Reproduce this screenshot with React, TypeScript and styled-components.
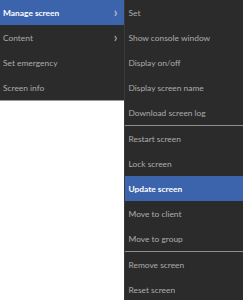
import styled, { createGlobalStyle } from "styled-components";

const GlobalStyle = createGlobalStyle`
  html, body {
    margin: 0;
    padding: 0;
    background: #ffffff;
  }
  body {
    font-family: Lato, "Open Sans", sans-serif;
  }
`;

const Page = styled.div`
  display: flex;
  align-items: flex-start;
  width: 243px;
  height: 300px;
  overflow: hidden;
`;

const Menu = styled.div<{ $width: number }>`
  width: ${(p) => p.$width}px;
  background: #2b2b2b;
  display: flex;
  flex-direction: column;
`;

const MainMenu = styled(Menu)`
  border-bottom: 1px solid #9a9a9a;
`;

const SubMenu = styled(Menu)`
  border-left: 1px solid #3a3a3a;
  height: 300px;
`;

const Item = styled.div<{ $active?: boolean }>`
  height: 25px;
  display: flex;
  align-items: center;
  justify-content: space-between;
  padding: 0 7px 0 3px;
  font-size: 8.4px;
  color: ${(p) => (p.$active ? "#ffffff" : "#ababab")};
  font-weight: ${(p) => (p.$active ? 700 : 400)};
  background: ${(p) => (p.$active ? "#3c64ad" : "transparent")};
  white-space: nowrap;
`;

const Arrow = styled.span`
  font-size: 13px;
  line-height: 1;
  color: #c0c0c0;
`;

const Divider = styled.div`
  height: 1px;
  background: #8e8e8e;
`;

const main = [
  { label: "Manage screen", sub: true, active: true },
  { label: "Content", sub: true },
  { label: "Set emergency" },
  { label: "Screen info" },
];

const subGroups = [
  ["Set", "Show console window", "Display on/off", "Display screen name", "Download screen log"],
  ["Restart screen", "Lock screen", "Update screen", "Move to client", "Move to group"],
  ["Remove screen", "Reset screen"],
];

export default function App() {
  return (
    <Page>
      <GlobalStyle />
      <MainMenu $width={125}>
        {main.map((m) => (
          <Item key={m.label} $active={m.active}>
            <span>{m.label}</span>
            {m.sub && <Arrow>›</Arrow>}
          </Item>
        ))}
      </MainMenu>
      <SubMenu $width={118}>
        {subGroups.map((group, gi) => (
          <div key={gi}>
            {gi > 0 && <Divider />}
            {group.map((label) => (
              <Item key={label} $active={label === "Update screen"}>
                {label}
              </Item>
            ))}
          </div>
        ))}
      </SubMenu>
    </Page>
  );
}
